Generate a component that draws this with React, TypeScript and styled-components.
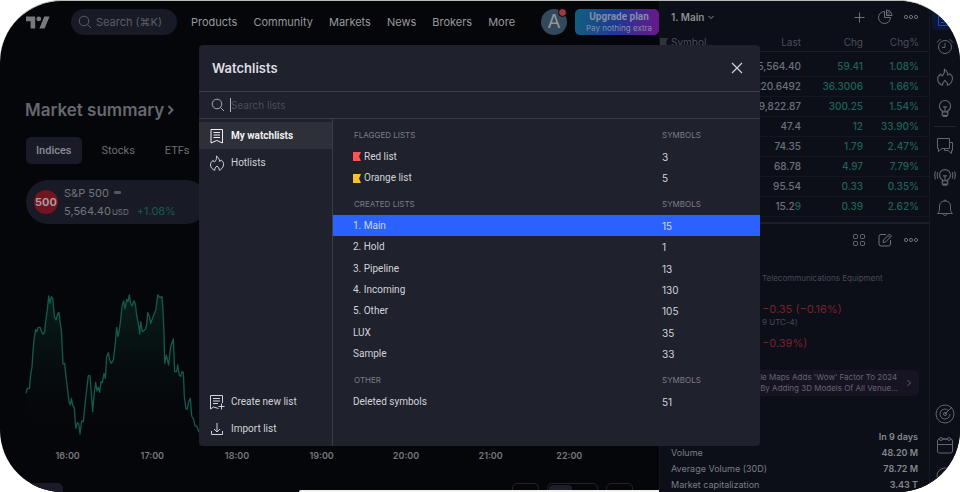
import React from "react";
import styled, { createGlobalStyle, css } from "styled-components";

const GlobalStyle = createGlobalStyle`
  *, *::before, *::after { box-sizing: border-box; }
  body { margin: 0; background: #ffffff; font-family: "Inter", "Liberation Sans", sans-serif; }
  button, input { font: inherit; color: inherit; }
  h1, h2, p, ul, dl, dd, dt { margin: 0; padding: 0; }
`;

const buttonReset = css`
  appearance: none;
  border: 0;
  padding: 0;
  background: none;
  color: inherit;
  cursor: pointer;
`;

const compactFont = `"Roboto", "Liberation Sans", sans-serif`;

/* ---------- page frame ---------- */

const Shell = styled.div`
  position: relative;
  display: grid;
  grid-template-columns: minmax(0, 1fr) 270px 31px;
  height: 100vh;
  overflow: hidden;
  border-top: 1px solid #b4beb6;
  border-radius: 62px;
  background: #05060a;
  color: #85878e;
`;

const MainColumn = styled.main`
  display: flex;
  flex-direction: column;
  min-width: 0;
  overflow: hidden;
`;

const TopBar = styled.header`
  display: flex;
  align-items: center;
  height: 42px;
  flex: none;
  padding-left: 26px;
`;

const LogoLink = styled.a`
  display: flex;
  width: 24px;
  margin-right: 21px;
  color: #77797c;
`;

const SearchPill = styled.button`
  ${buttonReset}
  display: flex;
  align-items: center;
  gap: 4px;
  width: 106px;
  height: 26px;
  padding-left: 7px;
  border-radius: 13px;
  background: #181b25;
  color: #5b5e67;
  font-size: 11px;
  white-space: nowrap;
`;

const Nav = styled.nav`
  display: flex;
  gap: 16px;
  margin-left: 14px;
  flex: 1;
`;

const NavLink = styled.a`
  color: #98999c;
  font-size: 11px;
  font-weight: 400;
  text-decoration: none;
`;

const Avatar = styled.button`
  ${buttonReset}
  position: relative;
  width: 26px;
  height: 26px;
  margin-right: 8px;
  border-radius: 50%;
  background: #33495b;
  color: #8f979c;
  font-size: 19px;
  line-height: 26px;
`;

const AvatarDot = styled.span`
  position: absolute;
  top: -1px;
  right: 0;
  width: 9px;
  height: 9px;
  border: 1px solid #05060a;
  border-radius: 50%;
  background: #a1383f;
`;

const UpgradeButton = styled.button`
  ${buttonReset}
  display: flex;
  flex-direction: column;
  align-items: center;
  justify-content: center;
  width: 84px;
  height: 26px;
  padding-left: 4px;
  border-radius: 5px;
  background: linear-gradient(100deg, #125c80 5%, #1d3a92 50%, #67188c 95%);
  color: #858da8;
  font-size: 8px;
  line-height: 11px;
  white-space: nowrap;
`;

const UpgradeTitle = styled.strong`
  font-family: ${compactFont};
  font-size: 10px;
  font-weight: 700;
  line-height: 12px;
`;

const SummaryTitle = styled.h1`
  display: flex;
  align-items: center;
  gap: 3px;
  margin: 55px 0 0 25px;
  color: #66686e;
  font-size: 17px;
  font-weight: 600;
  line-height: 24px;
`;

const Tabs = styled.div`
  display: flex;
  gap: 10px;
  margin: 15px 0 0 26px;
`;

const Tab = styled.button<{ $active?: boolean }>`
  ${buttonReset}
  height: 27px;
  padding: 0 10px;
  border-radius: 5px;
  background: ${(p) => (p.$active ? "#191c26" : "transparent")};
  color: ${(p) => (p.$active ? "#8b8d94" : "#6c6e74")};
  font-family: ${compactFont};
  font-size: 11px;
  font-weight: ${(p) => (p.$active ? 500 : 400)};
`;

const IndexPill = styled.button`
  ${buttonReset}
  display: flex;
  align-items: center;
  gap: 6px;
  width: 182px;
  height: 44px;
  flex: none;
  margin: 16px 0 56px 26px;
  padding-left: 8px;
  border-radius: 22px;
  background: #181b25;
  color: #74767d;
  font-size: 11px;
  line-height: 18px;
  text-align: left;
`;

const IndexBadge = styled.span`
  width: 24px;
  height: 24px;
  border-radius: 50%;
  background: #74141f;
  color: #a29b9f;
  font-size: 11px;
  font-weight: 700;
  line-height: 24px;
  text-align: center;
`;

const IndexLine = styled.span`
  display: flex;
  align-items: baseline;
  small { margin: 0 8px 0 1px; font-size: 8px; }
  em { color: #155c4d; font-style: normal; }
`;

const Dash = styled.i`
  align-self: center;
  width: 7px;
  height: 3px;
  margin-left: 5px;
  border-radius: 1px;
  background: #555860;
`;

const ChartSvg = styled.svg`
  display: block;
  flex: none;
  text { fill: #75777c; font-family: "Inter", sans-serif; font-size: 27px; font-weight: 600; }
`;

const RangeBar = styled.div`
  display: flex;
  gap: 8px;
  margin-top: 13px;
  padding-left: 26px;
`;

const RangeChip = styled.span<{ $filled?: boolean; $wide?: boolean }>`
  width: ${(p) => (p.$wide ? 51 : p.$filled ? 37 : 27)}px;
  height: 26px;
  padding: 1px;
  border: 1px solid ${(p) => (p.$filled ? "#191c26" : "#22242c")};
  border-radius: 5px;
  background: ${(p) => (p.$filled ? "#191c26" : "transparent")};
`;

const RangeThumb = styled.span`
  display: block;
  width: 23px;
  height: 22px;
  border-radius: 4px;
  background: #1d202a;
`;

const Spacer = styled.span<{ $size: number }>`
  flex: 0 1 ${(p) => p.$size}px;
`;

const BottomEdge = styled.div`
  position: absolute;
  left: 299px;
  right: 301px;
  bottom: 0;
  height: 2px;
  border-top-left-radius: 2px;
  background: #f1f1f1;
`;

/* ---------- right panel ---------- */

const Panel = styled.aside`
  min-width: 0;
  overflow: hidden;
  border-left: 1px solid #12151e;
  background: #0c0f18;
  color: #6d7078;
`;

const PanelBar = styled.div<{ $end?: boolean }>`
  display: flex;
  align-items: center;
  justify-content: ${(p) => (p.$end ? "flex-end" : "space-between")};
  height: 32px;
  padding: 0 10px 0 11px;
`;

const ListSelect = styled.button`
  ${buttonReset}
  display: flex;
  align-items: center;
  gap: 3px;
  color: #8b8d94;
  font-size: 10px;
  font-weight: 600;
`;

const IconGroup = styled.div`
  display: flex;
  gap: 10px;
`;

const IconButton = styled.button`
  ${buttonReset}
  display: flex;
  align-items: center;
  justify-content: center;
  width: 16px;
  height: 16px;
`;

const Quotes = styled.table`
  width: 100%;
  table-layout: fixed;
  border-collapse: collapse;
  border-bottom: 2px solid #1b1e28;
  font-size: 10px;
  line-height: 19px;
  font-weight: 500;

  th, td { padding: 0; border-bottom: 1px solid #141720; text-align: right; white-space: nowrap; }
  th { color: #4b4e57; font-weight: 400; line-height: 18px; border-bottom-color: #1b1e27; }
  th:first-child { text-align: left; }
  th:last-child, td:last-child { padding-right: 10px; }
`;

const Gap = styled.tr<{ $size: number }>`
  height: ${(p) => p.$size}px;
  td { border: 0; line-height: 0; }
`;

const SymbolHead = styled.span`
  display: flex;
  align-items: center;
  gap: 3px;
`;

const Tone = styled.span`
  color: #1d6457;
`;

const Details = styled.section`
  padding: 14px 0 0 102px;
  font-size: 8px;
  line-height: 16px;
  color: #474a53;
  white-space: nowrap;
`;

const Change = styled.p`
  color: #7d1f2d;
  font-size: 11px;
  line-height: 18px;
`;

const ChangeGroup = styled.div`
  margin-top: 14px;
  line-height: 8px;
  & + & { margin-top: 8px; }
`;

const NewsCard = styled.a`
  display: flex;
  align-items: center;
  justify-content: flex-end;
  gap: 7px;
  margin: 18px 10px 33px 11px;
  padding: 2px 6px 2px 0;
  border-radius: 6px;
  background: #161323;
  color: #65646f;
  font-size: 8px;
  line-height: 11px;
  text-decoration: none;
  white-space: nowrap;
`;

const Stats = styled.dl`
  padding: 0 11px;
  font-size: 9px;
  line-height: 16px;
`;

const StatRow = styled.div`
  display: flex;
  justify-content: space-between;
  min-height: 16px;
  white-space: nowrap;
  dt { color: #7b7d85; font-weight: 400; }
  dd { color: #85878e; font-weight: 600; }
`;

const Rail = styled.nav`
  display: flex;
  flex-direction: column;
  align-items: center;
  overflow: hidden;
  border-left: 1px solid #161922;
  background: #0c0f18;
  color: #64666d;
`;

const RailButton = styled.button<{ $active?: boolean }>`
  ${buttonReset}
  display: flex;
  flex: none;
  align-items: center;
  justify-content: center;
  width: 26px;
  height: ${(p) => (p.$active ? 22 : 31)}px;
  margin-top: ${(p) => (p.$active ? 7 : 0)}px;
  border-radius: 4px;
  background: ${(p) => (p.$active ? "#0b1638" : "transparent")};
  color: ${(p) => (p.$active ? "#234bb4" : "inherit")};
`;

const RailDivider = styled.hr`
  width: 22px;
  flex: none;
  margin: 3px 0;
  border: 0;
  border-top: 1px solid #22252e;
`;

const RailBottom = styled.div`
  margin-top: 175px;
`;

/* ---------- dialog ---------- */

const Overlay = styled.div`
  position: absolute;
  inset: 0;
  display: flex;
  align-items: center;
  justify-content: center;
  padding: 0 1px 2px 0;
`;

const Dialog = styled.section`
  display: flex;
  flex-direction: column;
  width: 561px;
  min-height: 401px;
  overflow: hidden;
  border-radius: 4px;
  background: #1f212c;
  color: #d2d3d8;
  font-size: 10px;
`;

const DialogHeader = styled.header`
  display: flex;
  align-items: center;
  justify-content: space-between;
  height: 47px;
  padding: 0 15px 0 13px;
  border-bottom: 1px solid #3b3d48;
  h2 { color: #dcdde2; font-size: 13px; font-weight: 600; }
`;

const SearchRow = styled.label`
  display: flex;
  align-items: center;
  gap: 5px;
  height: 27px;
  padding: 0 12px;
  border-bottom: 1px solid #3b3d48;
  color: #a4a6ad;
`;

const SearchInput = styled.input`
  flex: 1;
  height: 14px;
  padding: 0;
  border: 0;
  border-left: 1px solid #b0b2b8;
  outline: 0;
  background: transparent;
  font-size: 10px;
  &::placeholder { color: #4b4d57; opacity: 1; }
`;

const DialogBody = styled.div`
  display: grid;
  grid-template-columns: 134px minmax(0, 1fr);
  flex: 1;
`;

const Side = styled.div`
  display: flex;
  flex-direction: column;
  justify-content: space-between;
  padding: 3px 0 4px;
  border-right: 1px solid #3b3d48;
`;

const SideItem = styled.button<{ $active?: boolean }>`
  ${buttonReset}
  display: flex;
  align-items: center;
  gap: 6px;
  width: 100%;
  height: 27px;
  padding-left: 10px;
  background: ${(p) => (p.$active ? "#2d2f39" : "transparent")};
  color: ${(p) => (p.$active ? "#f0f0f3" : "#d2d3d8")};
  font-family: ${compactFont};
  font-weight: ${(p) => (p.$active ? 700 : 400)};
`;

const Lists = styled.div`
  display: flex;
  flex-direction: column;
  gap: 4px;
  padding-top: 5px;
`;

const ListTable = styled.table<{ $height: number }>`
  width: 100%;
  height: ${(p) => p.$height}px;
  border-collapse: collapse;
  table-layout: fixed;

  thead tr { height: 22px; }
  th { padding: 0 0 0 21px; color: #7c7e87; font-size: 8px; font-weight: 400; text-align: left; }
  td { padding: 0 0 0 20px; line-height: 20px; }
  th:last-child { width: 98px; padding-left: 0; }
  td:last-child { width: 98px; padding-left: 0; }
`;

const ListRow = styled.tr<{ $active?: boolean }>`
  background: ${(p) => (p.$active ? "#2962ff" : "transparent")};
`;

const ListButton = styled.button`
  ${buttonReset}
  display: flex;
  align-items: center;
  gap: 3px;
  font-family: ${compactFont};
`;

/* ---------- icons ---------- */

type IconProps = { size?: number; box?: number; children: React.ReactNode; stroke?: number };
const Icon = ({ size = 16, box = 16, stroke = 1, children }: IconProps) => (
  <svg width={size} height={size} viewBox={`0 0 ${box} ${box}`} fill="none" stroke="currentColor" strokeWidth={stroke} aria-hidden="true">
    {children}
  </svg>
);

const SearchIcon = () => (
  <Icon size={14} box={14}><circle cx="6" cy="6" r="4.8" /><path d="M9.5 9.5 13 13" /></Icon>
);
const Chevron = ({ down }: { down?: boolean }) => (
  <Icon size={8} box={8}><path d={down ? "M1.5 3 4 5.5 6.5 3" : "M2.5 1 5.5 4 2.5 7"} /></Icon>
);
const Dots = () => (
  <Icon><circle cx="3" cy="8" r="1.6" /><circle cx="8" cy="8" r="1.6" /><circle cx="13" cy="8" r="1.6" /></Icon>
);
const flamePath = "M7.5 1C9.600 2.600 10.600 4.600 10.500 6.500c.9-.2 1.400-.7 1.700-1.500C14 6.300 15 8.200 14.500 10.200 14 13 11.800 14.800 10.200 15.300c.3-1.800-.7-3-2.200-4.300-1.500 1.300-2.500 2.500-2.200 4.300C3.500 14.500 1.500 12.500 1.500 10c0-2.200 1.300-3.700 2.700-4.700.1.900.5 1.500 1.300 1.700C7 5.500 7.900 3.500 7.500 1Z";
const Flame = () => (
  <Icon size={18} box={16}><path strokeLinejoin="round" d={flamePath} /></Icon>
);
const bulb = (
  <path d="M7 13.500v-1.500C5 10.800 4 9.200 4 7.200a5 5 0 0 1 10 0c0 2-1 3.600-3 4.800v1.500M6.500 12.500h5v3h-5zM7.500 15.500v1h3v-1M9 12V8M7.200 8h3.600" />
);
const Bulb = () => <Icon size={20} box={18}>{bulb}</Icon>;
const BulbWaves = () => (
  <svg width="24" height="20" viewBox="-2 0 22 18" fill="none" stroke="currentColor" aria-hidden="true">
    {bulb}
    <path d="M2.300 4.500c-.8 2-.8 4 0 6M.2 3.800c-1 2.500-1 4.900 0 7.400M15.700 4.500c.8 2 .8 4 0 6M17.800 3.800c1 2.500 1 4.900 0 7.400" />
  </svg>
);
const Alarm = () => (
  <Icon size={18} box={18}><circle cx="9" cy="10" r="6.500" /><path d="M9 6v4.500H6M1 5.500 4.500 2M17 5.500 13.500 2" /></Icon>
);
const Chat = () => (
  <Icon size={18} box={18}><path d="M1.500 1.500h12v10H6l-3.500 3v-3h-1zM13.500 5.500h3v8h-1v3l-3.500-3H8.500v-2" /></Icon>
);
const Bell = () => (
  <Icon size={18} box={18}><path d="M1.500 14.500h15c-1.500-1.500-2-2.500-2-4.500V7c0-3-2-5-5.500-5S3.500 4 3.500 7v3c0 2-.5 3-2 4.500ZM7 14.500c0 1.300.8 2 2 2s2-.7 2-2M8 2c0-1.500 2-1.500 2 0" /></Icon>
);
const Radar = () => (
  <Icon size={20} box={20}><circle cx="10" cy="10" r="9" /><path d="M13.500 6.500a5 5 0 1 0 1.500 3.500M10 10l7-7" /><circle cx="10" cy="10" r="1.500" /></Icon>
);
const CalendarIcon = () => (
  <Icon size={18} box={18}><rect x="1.500" y="3" width="15" height="14" rx="2" /><path d="M1.500 8.500h15M6.500 3h5" /><circle cx="5" cy="3" r="1.500" fill="#0c0f18" /><circle cx="13" cy="3" r="1.500" fill="#0c0f18" /></Icon>
);
const Help = () => (
  <Icon size={18} box={18}><circle cx="9" cy="9" r="8" /><path d="M6.500 7c0-3.500 5-3.200 5-.2C11.500 9 9 8.500 9 11M9 12.500V14" /></Icon>
);
const RailList = () => (
  <Icon size={16}><path d="M1.500 1.500h13v13h-13zM4 5.500h8M4 8.500h8M4 11.500h8" /></Icon>
);
const Plus = () => <Icon><path d="M8.500 3.500v10M3.500 8.500h10" /></Icon>;
const Pie = () => (
  <Icon><path d="M7.500 2.500a6 6 0 1 0 6 6h-6zM9.500 1v5.500H15C15 3.500 12.500 1 9.500 1Z" /><path strokeWidth=".8" d="m9.500 4.500 3-2.500M10 6.500l4-3.500" /></Icon>
);
const GridIcon = () => (
  <Icon><rect x="2.500" y="2.500" width="4" height="4" rx="1" /><rect x="9.500" y="2.500" width="4" height="4" rx="1" /><rect x="2.500" y="9.500" width="4" height="4" rx="1" /><rect x="9.500" y="9.500" width="4" height="4" rx="1" /></Icon>
);
const Edit = () => (
  <Icon><path d="M9 2.500H4a2 2 0 0 0-2 2V12a2 2 0 0 0 2 2h7.500a2 2 0 0 0 2-2V8M6 10.500l.5-2.500 6-6 2 2-6 6zM11 3.500l2 2" /></Icon>
);
const Bookmark = ({ add }: { add?: boolean }) => (
  <Icon>
    {add ? (
      <path d="M13.500 9V1.500h-12v13.500l3-2 5 1.500M4 4.500h7M4 7h7M4 9.500h5M12.500 9.500v6M9.500 12.500h6" />
    ) : (
      <path d="M2 1.500h11.500V15L7.750 12.500 2 15zM4.500 4.500h6.500M4.500 7h6.500M4.500 9.500h6.500" />
    )}
  </Icon>
);
const Import = () => <Icon><path d="M8 2v9M5 8l3 3 3-3M2.500 10v3.500h11V10" /></Icon>;
const Close = () => <Icon stroke={1.2}><path d="m3 3 10 10M13 3 3 13" /></Icon>;
const Flag = ({ color }: { color: string }) => (
  <svg width="8" height="9" viewBox="0 0 8 9" aria-hidden="true"><path fill={color} d="M0 0h8L6 4.500 8 9H0z" /></svg>
);
const Logo = () => (
  <svg width="24" height="13" viewBox="0 0 24 13" fill="currentColor" aria-hidden="true">
    <path d="M0 .5h9.200v12H4.600V5.200H0z" /><circle cx="12.800" cy="2.900" r="2.400" /><path d="M18.200.5h5.400l-5 12h-5.200z" />
  </svg>
);

/* ---------- data ---------- */

const chartLine =
  "78,340 82,325 88,325 92,285 96,260 99,215 102,180 107,148 110,155 115,142 120,142 126,158 130,163 134,155 137,125 142,90 146,48 150,70 154,50 158,55 160,75 163,110 168,120 173,102 177,97 180,125 184,150 187,210 189,252 194,250 198,290 203,330 207,365 211,375 214,355 219,378 223,383 226,430 228,445 232,428 236,430 240,462 245,423 250,425 256,365 260,330 265,287 270,287 274,340 278,395 282,345 287,307 291,333 295,322 299,337 303,305 307,308 312,280 316,295 320,230 325,218 329,240 334,250 340,240 346,190 350,142 354,170 358,150 362,120 366,80 371,63 375,87 380,58 384,65 388,45 392,70 396,78 402,62 406,72 410,105 415,130 419,162 422,125 427,155 436,148 440,135 443,98 448,108 452,130 460,108 468,88 473,45 481,53 486,50 489,90 492,160 494,250 499,225 506,255 512,200 520,177 524,275 530,275 533,255 538,285 542,290 546,275 550,277 553,350 558,387 562,387 566,365 571,355 575,408 581,418 585,437 591,440 597,457";

const ticks: [string, number][] = [
  ["16:00", 203], ["17:00", 457], ["18:00", 711], ["19:00", 965], ["20:00", 1218], ["21:00", 1472], ["22:00", 1708],
];

const quotes = [
  ["5,564.40", "59.41", "1.08%"],
  ["220.6492", "36.3006", "1.66%"],
  ["9,822.87", "300.25", "1.54%"],
  ["47.4", "12", "33.90%"],
  ["74.35", "1.79", "2.47%"],
  ["68.78", "4.97", "7.79%"],
  ["95.54", "0.33", "0.35%"],
  ["15.29", "0.39", "2.62%"],
];

type Item = { name: string; count: number; flag?: string; active?: boolean };
const sections: { title: string; height: number; items: Item[] }[] = [
  {
    title: "FLAGGED LISTS",
    height: 65,
    items: [
      { name: "Red list", count: 3, flag: "#ff5252" },
      { name: "Orange list", count: 5, flag: "#fbc02d" },
    ],
  },
  {
    title: "CREATED LISTS",
    height: 172,
    items: [
      { name: "1. Main", count: 15, active: true },
      { name: "2. Hold", count: 1 },
      { name: "3. Pipeline", count: 13 },
      { name: "4. Incoming", count: 130 },
      { name: "5. Other", count: 105 },
      { name: "LUX", count: 35 },
      { name: "Sample", count: 33 },
    ],
  },
  { title: "OTHER", height: 43, items: [{ name: "Deleted symbols", count: 51 }] },
];

/* ---------- parts ---------- */

const Chart = () => (
  <ChartSvg width="660" height="190" viewBox="0 0 1980 570" role="img" aria-label="S&P 500 intraday">
    <defs>
      <linearGradient id="area" x1="0" y1="0" x2="0" y2="1">
        <stop offset="0" stopColor="#0b2a24" stopOpacity=".7" />
        <stop offset="1" stopColor="#05060a" stopOpacity="0" />
      </linearGradient>
    </defs>
    <polygon points={`78,490 ${chartLine} 597,490`} fill="url(#area)" />
    <polyline points={chartLine} fill="none" stroke="#14594c" strokeWidth="4" strokeLinejoin="round" />
    {ticks.map(([label, x]) => (
      <text key={label} x={x} y={538} textAnchor="middle">{label}</text>
    ))}
  </ChartSvg>
);

const WatchlistPanel = () => (
  <Panel>
    <PanelBar>
      <ListSelect>1. Main <Chevron down /></ListSelect>
      <IconGroup>
        <IconButton aria-label="Add symbol"><Plus /></IconButton>
        <IconButton aria-label="Advanced view"><Pie /></IconButton>
        <IconButton aria-label="More"><Dots /></IconButton>
      </IconGroup>
    </PanelBar>
    <Quotes>
      <colgroup><col width="72" /><col width="69" /><col width="62" /><col /></colgroup>
      <thead>
        <tr>
          <th><SymbolHead><Flag color="#30333c" />Symbol</SymbolHead></th>
          <th>Last</th><th>Chg</th><th>Chg%</th>
        </tr>
      </thead>
      <tbody>
        <Gap $size={5}><td colSpan={4} /></Gap>
        {quotes.map(([last, chg, pct]) => (
          <tr key={last}>
            <td />
            <td>{last === "15.29" ? <>15.2<Tone>9</Tone></> : last}</td>
            <td><Tone>{chg}</Tone></td>
            <td><Tone>{pct}</Tone></td>
          </tr>
        ))}
        <Gap $size={7}><td colSpan={4} /></Gap>
      </tbody>
    </Quotes>
    <PanelBar $end>
      <IconGroup>
        <IconButton aria-label="Layout"><GridIcon /></IconButton>
        <IconButton aria-label="Edit note"><Edit /></IconButton>
        <IconButton aria-label="More details"><Dots /></IconButton>
      </IconGroup>
    </PanelBar>
    <Details>
      <p>Telecommunications Equipment</p>
      <ChangeGroup>
        <Change>−0.35 (−0.16%)</Change>
        <p>9 UTC-4)</p>
      </ChangeGroup>
      <ChangeGroup>
        <Change>−0.39%)</Change>
      </ChangeGroup>
    </Details>
    <NewsCard href="#news">
      <span>le Maps Adds 'Wow' Factor To 2024<br />By Adding 3D Models Of All Venue...</span>
      <Chevron />
    </NewsCard>
    <Stats>
      <StatRow><dt /><dd>In 9 days</dd></StatRow>
      <StatRow><dt>Volume</dt><dd>48.20 M</dd></StatRow>
      <StatRow><dt>Average Volume (30D)</dt><dd>78.72 M</dd></StatRow>
      <StatRow><dt>Market capitalization</dt><dd>3.43 T</dd></StatRow>
    </Stats>
  </Panel>
);

const ToolRail = () => (
  <Rail aria-label="Tools">
    <RailButton $active aria-label="Watchlist"><RailList /></RailButton>
    <RailButton aria-label="Alerts"><Alarm /></RailButton>
    <RailButton aria-label="Hotlists"><Flame /></RailButton>
    <RailButton aria-label="Ideas"><Bulb /></RailButton>
    <RailDivider />
    <RailButton aria-label="Chats"><Chat /></RailButton>
    <RailButton aria-label="Streams"><BulbWaves /></RailButton>
    <RailButton aria-label="Notifications"><Bell /></RailButton>
    <RailBottom>
      <RailButton aria-label="Screener"><Radar /></RailButton>
      <RailButton aria-label="Calendar"><CalendarIcon /></RailButton>
      <RailButton aria-label="Help"><Help /></RailButton>
    </RailBottom>
  </Rail>
);

const WatchlistsDialog = () => (
  <Overlay>
    <Dialog role="dialog" aria-labelledby="dialog-title">
      <DialogHeader>
        <h2 id="dialog-title">Watchlists</h2>
        <IconButton aria-label="Close"><Close /></IconButton>
      </DialogHeader>
      <SearchRow>
        <SearchIcon />
        <SearchInput type="text" aria-label="Search lists" placeholder="Search lists" />
      </SearchRow>
      <DialogBody>
        <Side>
          <div>
            <SideItem $active><Bookmark />My watchlists</SideItem>
            <SideItem><Icon><path strokeLinejoin="round" d={flamePath} /></Icon>Hotlists</SideItem>
          </div>
          <div>
            <SideItem><Bookmark add />Create new list</SideItem>
            <SideItem><Import />Import list</SideItem>
          </div>
        </Side>
        <Lists>
          {sections.map((section) => (
            <ListTable key={section.title} $height={section.height}>
              <thead><tr><th>{section.title}</th><th>SYMBOLS</th></tr></thead>
              <tbody>
                {section.items.map((item) => (
                  <ListRow key={item.name} $active={item.active}>
                    <td><ListButton>{item.flag && <Flag color={item.flag} />}{item.name}</ListButton></td>
                    <td>{item.count}</td>
                  </ListRow>
                ))}
              </tbody>
            </ListTable>
          ))}
        </Lists>
      </DialogBody>
    </Dialog>
  </Overlay>
);

export default function App() {
  return (
    <>
      <GlobalStyle />
      <Shell>
        <MainColumn>
          <TopBar>
            <LogoLink href="#home" aria-label="Home"><Logo /></LogoLink>
            <SearchPill><SearchIcon />Search (⌘K)</SearchPill>
            <Nav>
              {["Products", "Community", "Markets", "News", "Brokers", "More"].map((label) => (
                <NavLink key={label} href={`#${label.toLowerCase()}`}>{label}</NavLink>
              ))}
            </Nav>
            <Avatar aria-label="Account">A<AvatarDot /></Avatar>
            <UpgradeButton><UpgradeTitle>Upgrade plan</UpgradeTitle>Pay nothing extra</UpgradeButton>
          </TopBar>
          <SummaryTitle>
            Market summary
            <svg width="7" height="10" viewBox="0 0 7 10" fill="none" stroke="currentColor" strokeWidth="2" aria-hidden="true"><path d="m1.500 1 4 4-4 4" /></svg>
          </SummaryTitle>
          <Tabs>
            <Tab $active>Indices</Tab><Tab>Stocks</Tab><Tab>ETFs</Tab>
          </Tabs>
          <IndexPill>
            <IndexBadge>500</IndexBadge>
            <span>
              <IndexLine>S&amp;P 500<Dash /></IndexLine>
              <IndexLine>5,564.40<small>USD</small><em>+1.08%</em></IndexLine>
            </span>
          </IndexPill>
          <Chart />
          <RangeBar>
            <RangeChip $filled />
            <Spacer $size={433} />
            <RangeChip />
            <RangeChip $wide><RangeThumb /></RangeChip>
            <RangeChip />
          </RangeBar>
        </MainColumn>
        <WatchlistPanel />
        <ToolRail />
        <BottomEdge />
        <WatchlistsDialog />
      </Shell>
    </>
  );
}
